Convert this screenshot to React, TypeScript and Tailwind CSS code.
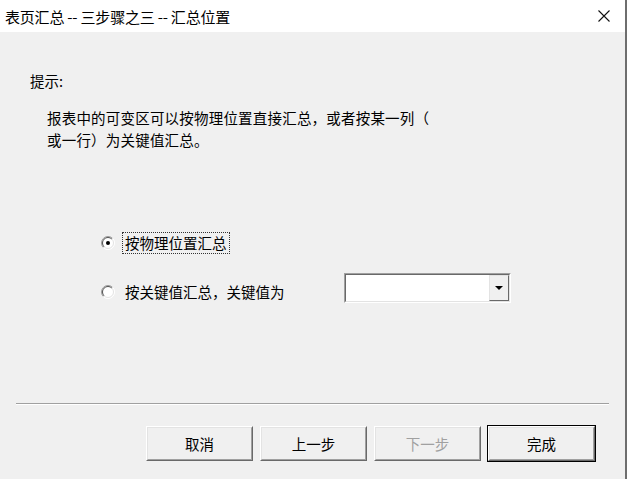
import React from "react"

const FONT = { fontFamily: '"Noto Sans CJK SC", "Noto Sans", sans-serif' }

function Radio({ checked }: { checked?: boolean }) {
    return (
        <svg width="14" height="14" viewBox="0 0 14 14" className="shrink-0">
            <circle cx="7" cy="7" r="6.5" fill="#fff" />
            <path d="M2.4 11.6 A6.5 6.5 0 0 1 11.6 2.4" stroke="#9a9a9a" strokeWidth="1" fill="none" />
            <path d="M11.6 2.4 A6.5 6.5 0 0 1 2.4 11.6" stroke="#ffffff" strokeWidth="1" fill="none" />
            <path d="M3.1 10.9 A5.5 5.5 0 0 1 10.9 3.1" stroke="#505050" strokeWidth="1" fill="none" />
            <path d="M10.9 3.1 A5.5 5.5 0 0 1 3.1 10.9" stroke="#e3e3e3" strokeWidth="1" fill="none" />
            {checked && <circle cx="7" cy="7" r="2" fill="#000" />}
        </svg>
    )
}

function Btn({ label, disabled, primary }: { label: string; disabled?: boolean; primary?: boolean }) {
    return (
        <div className={primary ? "border border-black" : "border border-transparent"}>
            <div className="border border-t-white border-l-white border-b-[#696969] border-r-[#696969]">
                <div
                    className={
                        "w-[105px] h-[33px] flex items-center justify-center border border-t-[#e3e3e3] border-l-[#e3e3e3] border-b-[#a0a0a0] border-r-[#a0a0a0] bg-[#f0f0f0] text-[14.5px] " +
                        (disabled ? "text-[#a0a0a0]" : "text-black")
                    }
                >
                    {label}
                </div>
            </div>
        </div>
    )
}

export default function App() {
    return (
        <div className="w-[627px] h-[479px] flex flex-col bg-[#f0f0f0] border-r-2 border-[#6e6e6e] text-black" style={FONT}>
            {/* title bar */}
            <div className="h-[32px] shrink-0 bg-white flex items-center pl-[5px] pr-[15px]">
                <span className="text-[15px] leading-none tracking-[-0.2px]">表页汇总 -- 三步骤之三 -- 汇总位置</span>
                <svg width="12" height="12" viewBox="0 0 12 12" className="ml-auto">
                    <path d="M0.5 0.5 L11.5 11.5 M11.5 0.5 L0.5 11.5" stroke="#111" strokeWidth="1.1" />
                </svg>
            </div>

            {/* body */}
            <div className="flex flex-col pt-[38px]">
                <div className="pl-[30px] h-[22px] leading-[22px] text-[14.5px]">提示:</div>
                <div className="pl-[47px] mt-[15px] leading-[22px] text-[14.5px] tracking-[0.2px]">
                    报表中的可变区可以按物理位置直接汇总，或者按某一列（
                    <br />
                    或一行）为关键值汇总。
                </div>

                <div className="flex items-center pl-[101px] mt-[81px] h-[22px]">
                    <Radio checked />
                    <span className="ml-[7px] px-[2px] h-[22px] leading-[20px] border border-dotted border-[#333] text-[14.5px]">按物理位置汇总</span>
                </div>

                <div className="flex items-start pl-[101px] mt-[19px]">
                    <div className="flex items-center h-[22px] mt-[8px]">
                        <Radio />
                        <span className="ml-[7px] px-[2px] h-[22px] leading-[20px] border border-transparent text-[14.5px]">按关键值汇总，关键值为</span>
                    </div>
                    <div className="ml-auto mr-[114px] w-[167px] h-[30px] border border-t-[#a0a0a0] border-l-[#a0a0a0] border-b-white border-r-white">
                        <div className="h-full flex border border-t-[#696969] border-l-[#696969] border-b-[#e3e3e3] border-r-[#e3e3e3] bg-white">
                            <div className="flex-1" />
                            <div className="w-[20px] h-full border border-t-[#e3e3e3] border-l-[#e3e3e3] border-b-[#696969] border-r-[#696969] bg-[#f0f0f0] flex items-center justify-center">
                                <svg width="8" height="4" viewBox="0 0 8 4">
                                    <path d="M0 0 H8 L4 4 Z" fill="#000" />
                                </svg>
                            </div>
                        </div>
                    </div>
                </div>

                <div className="mx-[16px] mt-[100px] h-[2px] border-t border-t-[#a0a0a0] border-b border-b-white" />

                <div className="flex justify-end gap-[5px] pr-[29px] mt-[20px]">
                    <Btn label="取消" />
                    <Btn label="上一步" />
                    <Btn label="下一步" disabled />
                    <Btn label="完成" primary />
                </div>
            </div>
        </div>
    )
}
